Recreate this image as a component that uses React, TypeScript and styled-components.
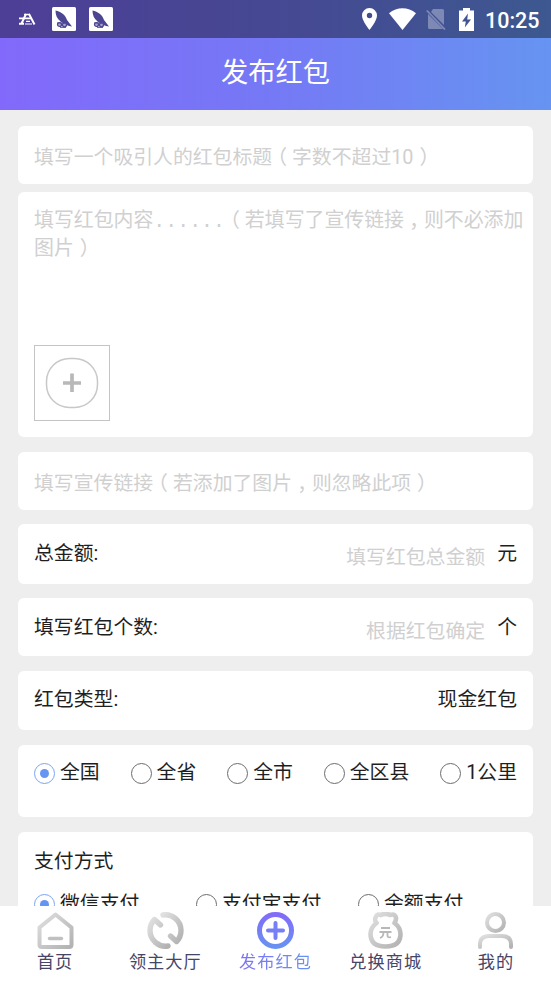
import React from "react";
import styled, { createGlobalStyle, css } from "styled-components";

const GlobalStyle = createGlobalStyle`
  * { box-sizing: border-box; }
  html, body { margin: 0; height: 981px; overflow: hidden; background: #eee; }
  body {
    font-family: Roboto, "Noto Sans CJK SC", sans-serif;
    font-size: 19.85px;
    color: #1f1f1f;
  }
  svg { display: block; }
`;

const Screen = styled.div`
  width: 551px;
  height: 981px;
  display: flex;
  flex-direction: column;
  overflow: hidden;
  background: #eee;
`;

const Header = styled.header`
  flex: none;
  height: 110px;
  background: linear-gradient(90deg, #8269fb 0%, #7579f5 50%, #6694f1 100%);
`;

const StatusBar = styled.div`
  height: 38px;
  padding: 0 12px 0 19px;
  display: flex;
  align-items: center;
  justify-content: space-between;
  background: rgba(0, 0, 0, 0.4);
  color: #fff;
`;

const StatusGroup = styled.div`
  display: flex;
  align-items: center;
`;

const AppBadge = styled.div<{ $gap: number }>`
  width: 24px;
  height: 24px;
  margin-left: ${(p) => p.$gap}px;
  border-radius: 1.5px;
  background: #fff;
`;

const Slot = styled.span<{ $left: number }>`
  margin-left: ${(p) => p.$left}px;
`;

const Clock = styled.span`
  margin-left: 11px;
  width: 54px;
  font: 500 21.5px/38px Roboto, sans-serif;
  padding-top: 3px;
  white-space: nowrap;
`;

const Title = styled.h1`
  margin: 0;
  height: 72px;
  font-size: 27.2px;
  font-weight: 400;
  line-height: 70px;
  text-align: center;
  color: #fff;
`;

const Form = styled.main`
  flex: 1;
  min-height: 0;
  overflow: hidden;
  padding: 16px 18px 0;
`;

const Card = styled.section<{ $h: number; $gap: number }>`
  height: ${(p) => p.$h}px;
  margin-bottom: ${(p) => p.$gap}px;
  padding: 0 16px;
  border-radius: 6px;
  background: #fff;
`;

const Hint = styled.div<{ $lh: number }>`
  color: #d0d0d0;
  line-height: ${(p) => p.$lh}px;
  white-space: nowrap;
`;

const Body = styled(Hint)`
  height: 153px;
  padding-top: 16px;
  font-family: "Liberation Mono", "Noto Sans CJK SC", monospace;
  font-size: 19.9px;
`;

const Punct = styled.span<{ $shift?: number; $drop?: number }>`
  font-family: "Noto Sans CJK TC", sans-serif;
  line-height: 0;
  vertical-align: ${(p) => -(p.$drop ?? 0)}px;
  margin: 0 ${(p) => -(p.$shift ?? 0)}px 0 ${(p) => p.$shift ?? 0}px;
`;

const Upload = styled.button`
  display: flex;
  align-items: center;
  justify-content: center;
  width: 76px;
  height: 76px;
  padding: 0;
  border: 1.5px solid #c4c4c4;
  background: #fff;
`;

const Row = styled.div<{ $lh: number }>`
  display: flex;
  justify-content: space-between;
  line-height: ${(p) => p.$lh}px;
`;

const Field = styled.div`
  display: flex;
`;

const FieldHint = styled.span`
  margin: 4px 12px 0 0;
  color: #d0d0d0;
`;

const Options = styled.div<{ $columns?: boolean }>`
  ${(p) =>
    p.$columns
      ? css`
          display: grid;
          grid-template-columns: repeat(3, 162px);
        `
      : css`
          display: flex;
          justify-content: space-between;
        `}
`;

const Option = styled.label`
  display: flex;
  align-items: flex-start;
  line-height: 56px;
  white-space: nowrap;
`;

const Radio = styled.span<{ $on?: boolean }>`
  display: flex;
  align-items: center;
  justify-content: center;
  width: 21px;
  height: 21px;
  margin: 18.4px 5px 0 0;
  border: 1px solid ${(p) => (p.$on ? "#7ba4f5" : "#6c6c6c")};
  border-radius: 50%;
  &::after {
    content: "";
    display: ${(p) => (p.$on ? "block" : "none")};
    width: 9px;
    height: 9px;
    border-radius: 50%;
    background: #6694f1;
  }
`;

const Subtitle = styled.div`
  height: 44px;
  line-height: 59px;
`;

const TabBar = styled.nav`
  flex: none;
  height: 75px;
  display: grid;
  grid-template-columns: repeat(5, 1fr);
  background: #fff;
`;

const Tab = styled.a`
  display: flex;
  flex-direction: column;
  align-items: center;
  padding-top: 6px;
`;

const TabLabel = styled.span<{ $active?: boolean }>`
  font-size: 17.2px;
  letter-spacing: 1px;
  line-height: 26px;
  color: #454568;
  ${(p) =>
    p.$active &&
    css`
      color: transparent;
      background: linear-gradient(90deg, #8070f5, #6694f1);
      background-clip: text;
    `}
`;

const BirdIcon = () => (
  <svg width="24" height="24" viewBox="0 0 24 24" fill="none">
    <path d="M3.500 3.500C9 4.500 13.500 8 15 13L20 19.500C16.500 19.500 12 17 8.500 14.500C5 12 3.500 8 3.500 3.500Z" fill="#4b4592" />
    <path d="M4 11L8 14.500" stroke="#fff" strokeWidth=".5" />
    <circle cx="7.500" cy="17.500" r="2" fill="#a5a2c8" stroke="#4b4592" strokeWidth="1.200" />
    <circle cx="12.500" cy="17.800" r="2" fill="#a5a2c8" stroke="#4b4592" strokeWidth="1.200" />
    <path d="M5 16h8M8 20.300h6" stroke="#4b4592" strokeWidth="1" />
  </svg>
);

const TabIcon = ({ name }: { name: string }) => (
  <svg width="37" height="37" viewBox="0 0 37 37" fill="none" strokeLinecap="round" strokeLinejoin="round">
    <defs>
      <linearGradient id={"g" + name} x1="0" y1="0" x2="1" y2="1">
        <stop offset="0" stopColor="#e0e0e0" />
        <stop offset="0.5" stopColor="#c8c8c8" />
        <stop offset="1" stopColor="#b2b2b2" />
      </linearGradient>
      <linearGradient id="violet" gradientUnits="userSpaceOnUse" x1="18" y1="0" x2="18" y2="37">
        <stop offset="0" stopColor="#836af9" />
        <stop offset="1" stopColor="#6694f1" />
      </linearGradient>
    </defs>
    {name === "home" && (
      <g stroke="url(#ghome)">
        <path d="M2.500 15.500L18.500 2.500L34.500 15.500V32.500Q34.500 35 32 35H5Q2.500 35 2.500 32.500Z" strokeWidth="4" />
        <path d="M12.500 26.500H24.500V26.600H12.500Z" stroke="#c0c0c0" strokeWidth="3.400" />
      </g>
    )}
    {name === "hall" && (
      <g strokeWidth="5.400">
        <path d="M16 3C25.500 1.500 34 9 34 18.500C34 23 32.500 26.500 29.500 29.500L23.500 24" stroke="url(#ghall)" />
        <path d="M21 34C11.500 35.500 3 28 3 18.500C3 14 4.500 10.500 7.500 7.500L13.500 13" stroke="url(#ghall)" />
      </g>
    )}
    {name === "publish" && (
      <g stroke="url(#violet)">
        <circle cx="18.500" cy="18.500" r="16" strokeWidth="5" />
        <path d="M18.500 11V26M11 18.500H26" strokeWidth="4" stroke="#767ff5" />
      </g>
    )}
    {name === "mall" && (
      <g>
        <path d="M9 4.500Q10 1.500 13.500 3Q18.500 1 23.500 3Q27 1.500 28.500 4.500Q30 7 27.500 11C31.500 14 33.500 18 33.500 22Q33.500 34.500 18.500 34.500Q3.500 34.500 3.500 22C3.500 18 5.500 14 9.500 11C7 8 8 7 9 4.500Z" stroke="url(#gmall)" strokeWidth="4.600" />
        <path d="M14 16H23M12.500 20H24.500M16.500 20Q16.500 25 13 26M20.500 20V24Q20.500 26 24 25" stroke="#b8b8b8" strokeWidth="1.800" strokeLinecap="butt" />
      </g>
    )}
    {name === "mine" && (
      <g stroke="url(#gmine)" strokeWidth="4">
        <circle cx="18.500" cy="10.500" r="8.500" />
        <path d="M3 35V32.500Q3 24 12 24H25Q34 24 34 32.500V35" />
      </g>
    )}
  </svg>
);

const tabs = [
  { id: "home", label: "首页" },
  { id: "hall", label: "领主大厅" },
  { id: "publish", label: "发布红包" },
  { id: "mall", label: "兑换商城" },
  { id: "mine", label: "我的" },
];

const Open = () => <Punct $shift={-5}>（</Punct>;
const Close = () => <Punct $shift={6}>）</Punct>;
const Comma = () => <Punct $drop={7}>，</Punct>;

const Choice = ({ label, on }: { label: string; on?: boolean }) => (
  <Option>
    <Radio $on={on} />
    {label}
  </Option>
);

export default function App() {
  return (
    <Screen>
      <GlobalStyle />
      <Header>
        <StatusBar>
          <StatusGroup>
            <svg width="17" height="12" viewBox="0 0 17 12" fill="none" stroke="#fff">
              <path d="M0 5.300H12M5 1.500H11" strokeWidth="1.700" />
              <path d="M10 1L15.500 11.500M7 1L2.500 10.500M0 10.800H5" strokeWidth="2" />
              <path d="M7 8.300H11M6 11H13" strokeWidth="1.200" />
            </svg>
            <AppBadge $gap={16}><BirdIcon /></AppBadge>
            <AppBadge $gap={13}><BirdIcon /></AppBadge>
          </StatusGroup>
          <StatusGroup>
            <svg width="15" height="22" viewBox="0 0 15 22">
              <path fillRule="evenodd" fill="#fff" d="M7.500 0A7.500 7.500 0 0 0 0 7.500C0 13 7.500 22 7.500 22S15 13 15 7.500A7.500 7.500 0 0 0 7.500 0ZM7.500 4.800A2.700 2.700 0 1 1 7.500 10.200A2.700 2.700 0 0 1 7.500 4.800Z" />
            </svg>
            <Slot $left={12}>
              <svg width="27" height="22" viewBox="0 0 27 22">
                <path fill="#fff" d="M0 5.200C8-1.500 19-1.500 27 5.200L13.500 22Z" />
              </svg>
            </Slot>
            <Slot $left={10}>
              <svg width="20" height="22" viewBox="0 0 20 22">
                <path fill="#fff" opacity=".32" d="M7 1H16.500Q18 1 18 2.500V17L5 4ZM2 6L17 21H3.500Q2 21 2 19.500Z" />
                <path d="M.8 2.500L19 21.500" stroke="#fff" opacity=".32" strokeWidth="1.800" />
              </svg>
            </Slot>
            <Slot $left={13}>
              <svg width="15" height="23" viewBox="0 0 15 23">
                <path fillRule="evenodd" fill="#fff" d="M4 0H11V2.500H15V23H0V2.500H4ZM9 5.500L3 13.500H6.800L5.800 19.500L12 11.500H8.200Z" />
              </svg>
            </Slot>
            <Clock>10:25</Clock>
          </StatusGroup>
        </StatusBar>
        <Title>发布红包</Title>
      </Header>
      <Form>
        <Card $h={58} $gap={8}>
          <Hint $lh={64}>
            填写一个吸引人的红包标题<Open />字数不超过10<Close />
          </Hint>
        </Card>
        <Card $h={245} $gap={15}>
          <Body $lh={28}>
            填写红包内容......<Open />若填写了宣传链接<Comma />则不必添加
            <br />
            图片<Close />
          </Body>
          <Upload>
            <svg width="54" height="52" viewBox="0 0 54 52" fill="none">
              <rect x="1.500" y="1.500" width="51" height="49" rx="23" stroke="#c8c8c8" strokeWidth="1.500" />
              <path d="M27 16.500V35M18 26H36" stroke="#b8b8b8" strokeWidth="3.700" />
            </svg>
          </Upload>
        </Card>
        <Card $h={58} $gap={14}>
          <Hint $lh={64}>
            填写宣传链接<Open />若添加了图片<Comma />则忽略此项<Close />
          </Hint>
        </Card>
        <Card $h={60} $gap={14}>
          <Row $lh={59}>
            <span>总金额:</span>
            <Field><FieldHint>填写红包总金额</FieldHint>元</Field>
          </Row>
        </Card>
        <Card $h={58} $gap={15}>
          <Row $lh={59}>
            <span>填写红包个数:</span>
            <Field><FieldHint>根据红包确定</FieldHint>个</Field>
          </Row>
        </Card>
        <Card $h={59} $gap={15}>
          <Row $lh={57}>
            <span>红包类型:</span>
            <span>现金红包</span>
          </Row>
        </Card>
        <Card $h={72} $gap={15}>
          <Options>
            <Choice label="全国" on />
            <Choice label="全省" />
            <Choice label="全市" />
            <Choice label="全区县" />
            <Choice label="1公里" />
          </Options>
        </Card>
        <Card $h={160} $gap={0}>
          <Subtitle>支付方式</Subtitle>
          <Options $columns>
            <Choice label="微信支付" on />
            <Choice label="支付宝支付" />
            <Choice label="余额支付" />
          </Options>
        </Card>
      </Form>
      <TabBar>
        {tabs.map((t) => (
          <Tab key={t.id}>
            <TabIcon name={t.id} />
            <TabLabel $active={t.id === "publish"}>{t.label}</TabLabel>
          </Tab>
        ))}
      </TabBar>
    </Screen>
  );
}
